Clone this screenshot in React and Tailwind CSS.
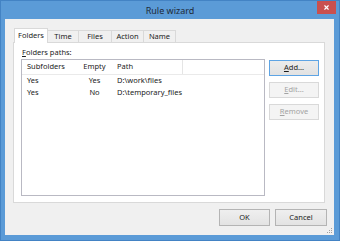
import { X } from 'lucide-react'

const TABS = [
  { label: 'Folders', w: 'w-[34px]', active: true },
  { label: 'Time', w: 'w-[31px]' },
  { label: 'Files', w: 'w-[33px]' },
  { label: 'Action', w: 'w-[32px]' },
  { label: 'Name', w: 'w-[32px]' },
]

const ROWS = [
  { sub: 'Yes', empty: 'Yes', path: 'D:\\work\\files' },
  { sub: 'Yes', empty: 'No', path: 'D:\\temporary_files' },
]

function Key({ children }) {
  return <span className="underline underline-offset-[1px]">{children}</span>
}

function Button({ children, primary, disabled, className = '' }) {
  const tone = disabled
    ? 'bg-[#f4f4f4] border-[#d9d9d9] text-[#a3a3a3]'
    : primary
      ? 'bg-gradient-to-b from-[#ececec] to-[#e2e2e2] border-[#5ea4e4] text-[#1b1b1b]'
      : 'bg-gradient-to-b from-[#efefef] to-[#e3e3e3] border-[#b4b4b4] text-[#1b1b1b]'
  return (
    <div className={`h-[16px] flex items-center justify-center border ${tone} ${className}`}>
      {children}
    </div>
  )
}

export default function App() {
  return (
    <div className="w-[340px] h-[241px] bg-[#5b9bd7] border border-[#4383c4] flex flex-col text-[7.5px] text-[#1b1b1b] font-['Noto_Sans',sans-serif] leading-none">
      {/* Title bar */}
      <div className="h-[18px] relative flex items-center justify-center">
        <span className="text-[9px] text-[#1e2a38] pt-[1px]">Rule wizard</span>
        <div className="absolute top-0 right-[3px] w-[19px] h-[13px] bg-[#c9504f] flex items-center justify-center">
          <X className="w-[7px] h-[7px] text-white" strokeWidth={4} />
        </div>
      </div>

      {/* Client area */}
      <div className="ml-[4px] mr-[5px] mb-[5px] flex-1 bg-[#f0f0f0] relative pl-[8px] pt-[9px] pr-[8px]">
        {/* Tabs */}
        <div className="h-[14px] flex items-end pl-[1px]">
          {TABS.map((t) =>
            t.active ? (
              <div
                key={t.label}
                className={`${t.w} h-[15px] -mb-px relative z-10 bg-white border border-b-0 border-[#d9d9d9] flex items-center justify-center`}
              >
                {t.label}
              </div>
            ) : (
              <div
                key={t.label}
                className={`${t.w} h-[12px] bg-[#f0f0f0] border border-b-0 border-l-0 border-[#d9d9d9] flex items-center justify-center pt-[1px]`}
              >
                {t.label}
              </div>
            )
          )}
        </div>

        {/* Panel */}
        <div className="w-[312px] h-[161px] bg-white border border-[#d9d9d9] pl-[7px] pt-[3px] flex flex-col">
          <div className="h-[13px] flex items-center pl-[1px]">
            <Key>F</Key>olders paths:
          </div>
          <div className="flex gap-[4px]">
            <div className="w-[244px] h-[137px] border border-[#b9b9c3]">
              <div className="h-[15px] flex items-center border-b border-[#eaeaea]">
                <div className="w-[55px] pl-[5px]">Subfolders</div>
                <div className="w-[35px] text-center">Empty</div>
                <div className="w-[71px] pl-[5px] h-full flex items-center border-r border-[#e5e5e5]">Path</div>
              </div>
              {ROWS.map((r) => (
                <div key={r.path} className="h-[12px] flex items-center">
                  <div className="w-[55px] pl-[5px]">{r.sub}</div>
                  <div className="w-[35px] text-center">{r.empty}</div>
                  <div className="pl-[5px]">{r.path}</div>
                </div>
              ))}
            </div>
            <div className="w-[50px] mt-[1px] flex flex-col gap-[6px]">
              <Button primary>
                <Key>A</Key>dd...
              </Button>
              <Button disabled>
                <Key>E</Key>dit...
              </Button>
              <Button disabled>
                <Key>R</Key>emove
              </Button>
            </div>
          </div>
        </div>

        {/* Dialog buttons */}
        <div className="flex justify-end gap-[5px] mt-[6px] -mr-[1px]">
          <Button className="w-[51px] !h-[17px]">OK</Button>
          <Button className="w-[52px] !h-[17px]">Cancel</Button>
        </div>

        {/* Resize grip */}
        <svg className="absolute right-[1px] bottom-[1px]" width="6" height="6" viewBox="0 0 6 6">
          <rect x="4" y="0" width="1" height="1" fill="#a0a0a0" />
          <rect x="2" y="2" width="1" height="1" fill="#a0a0a0" />
          <rect x="4" y="2" width="1" height="1" fill="#a0a0a0" />
          <rect x="0" y="4" width="1" height="1" fill="#a0a0a0" />
          <rect x="2" y="4" width="1" height="1" fill="#a0a0a0" />
          <rect x="4" y="4" width="1" height="1" fill="#a0a0a0" />
        </svg>
      </div>
    </div>
  )
}
